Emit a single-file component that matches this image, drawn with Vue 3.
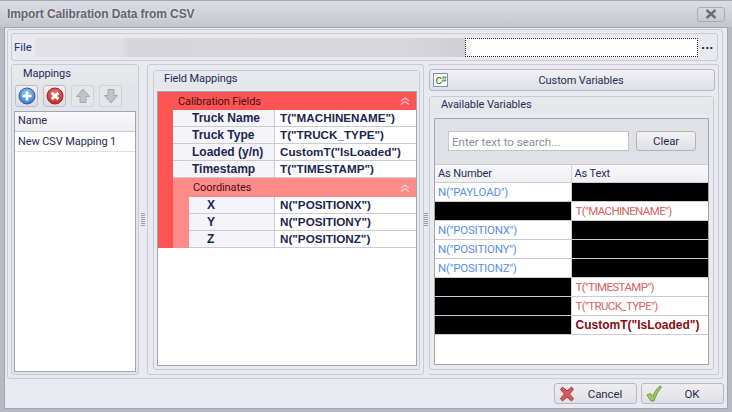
<script setup>
const calibration = [
  ['Truck Name', 'T("MACHINENAME")'],
  ['Truck Type', 'T("TRUCK_TYPE")'],
  ['Loaded (y/n)', 'CustomT("IsLoaded")'],
  ['Timestamp', 'T("TIMESTAMP")'],
]
const coords = [
  ['X', 'N("POSITIONX")'],
  ['Y', 'N("POSITIONY")'],
  ['Z', 'N("POSITIONZ")'],
]
const variables = [
  ['N("PAYLOAD")', null],
  [null, 'T("MACHINENAME")'],
  ['N("POSITIONX")', null],
  ['N("POSITIONY")', null],
  ['N("POSITIONZ")', null],
  [null, 'T("TIMESTAMP")'],
  [null, 'T("TRUCK_TYPE")'],
  [null, 'CustomT("IsLoaded")'],
]
</script>

<template>
  <div class="window">
    <header class="titlebar">
      <span class="title">Import Calibration Data from CSV</span>
      <button class="close">
        <svg width="12" height="10" viewBox="0 0 12 10"><path d="M1.5 1 L10.5 9 M10.5 1 L1.5 9" stroke="#6d6f78" stroke-width="2.4" fill="none"/></svg>
      </button>
    </header>

    <div class="client">
      <div class="root group">
        <div class="file group">
          <span class="file-label">File</span>
          <div class="file-input">
            <div class="blurred"></div>
            <div class="focus"></div>
          </div>
          <span class="dots">...</span>
        </div>

        <div class="lower">
          <section class="mappings group">
            <div class="group-title map-title">Mappings</div>
            <div class="toolbar">
              <button class="tool">
                <svg width="18" height="18" viewBox="0 0 18 18">
                  <defs><radialGradient id="blue" cx="50%" cy="35%" r="65%"><stop offset="0" stop-color="#a6d0f5"/><stop offset="1" stop-color="#2f78c4"/></radialGradient></defs>
                  <circle cx="9" cy="9" r="8" fill="url(#blue)" stroke="#2a64a8"/>
                  <path d="M9 4.5 V13.5 M4.5 9 H13.5" stroke="#fff" stroke-width="2.6"/>
                </svg>
              </button>
              <button class="tool">
                <svg width="18" height="18" viewBox="0 0 18 18">
                  <defs><radialGradient id="red" cx="50%" cy="35%" r="65%"><stop offset="0" stop-color="#ee7d7d"/><stop offset="1" stop-color="#bf2525"/></radialGradient></defs>
                  <circle cx="9" cy="9" r="8" fill="url(#red)" stroke="#a32626"/>
                  <path d="M5.7 5.7 L12.3 12.3 M12.3 5.7 L5.7 12.3" stroke="#fff" stroke-width="2.8"/>
                </svg>
              </button>
              <button class="tool dim">
                <svg width="16" height="18" viewBox="0 0 16 18"><path d="M8 2 L14.5 9.5 H11 V15.5 H5 V9.5 H1.5 Z" fill="#c2c3c6" stroke="#a5a6aa"/></svg>
              </button>
              <button class="tool dim">
                <svg width="16" height="18" viewBox="0 0 16 18"><path d="M8 16 L14.5 8.5 H11 V2.5 H5 V8.5 H1.5 Z" fill="#c2c3c6" stroke="#a5a6aa"/></svg>
              </button>
            </div>
            <div class="list">
              <div class="list-head">Name</div>
              <div class="list-row">New CSV Mapping 1</div>
            </div>
          </section>

          <div class="splitter"><i class="grip"></i></div>

          <section class="middle group">
            <div class="field group">
              <div class="group-title field-title">Field Mappings</div>
              <div class="tree">
                <div class="lvl1">
                  <div class="band band1">
                    <span>Calibration Fields</span>
                    <svg class="chev" width="10" height="8" viewBox="0 0 10 8"><path d="M1 4 L5 1 L9 4 M1 7.5 L5 4.5 L9 7.5" stroke="#e6c3c3" stroke-width="1.4" fill="none"/></svg>
                  </div>
                  <div v-for="r in calibration" :key="r[0]" class="trow">
                    <div class="tkey">{{ r[0] }}</div>
                    <div class="tval">{{ r[1] }}</div>
                  </div>
                  <div class="lvl2">
                    <div class="band band2">
                      <span>Coordinates</span>
                      <svg class="chev" width="10" height="8" viewBox="0 0 10 8"><path d="M1 4 L5 1 L9 4 M1 7.5 L5 4.5 L9 7.5" stroke="#eccfcf" stroke-width="1.4" fill="none"/></svg>
                    </div>
                    <div v-for="r in coords" :key="r[0]" class="trow nested">
                      <div class="tkey">{{ r[0] }}</div>
                      <div class="tval">{{ r[1] }}</div>
                    </div>
                  </div>
                </div>
              </div>
            </div>
          </section>

          <div class="splitter narrow"><i class="grip"></i></div>

          <section class="right group">
            <button class="custom">
              <span class="csharp">c<b>#</b></span>
              <span class="custom-label">Custom Variables</span>
            </button>
            <div class="avail group">
              <div class="group-title avail-title">Available Variables</div>
              <div class="vars">
                <div class="search">
                  <div class="search-input">Enter text to search...</div>
                  <button class="clear">Clear</button>
                </div>
                <div class="vhead">
                  <div>As Number</div>
                  <div>As Text</div>
                </div>
                <div v-for="(v, i) in variables" :key="i" class="vrow">
                  <div :class="['vcell', 'num', { black: !v[0] }]">{{ v[0] }}</div>
                  <div :class="['vcell', 'txt', { black: !v[1], strong: i === 7 }]">{{ v[1] }}</div>
                </div>
              </div>
            </div>
          </section>
        </div>
      </div>

      <footer class="footer">
        <button class="action">
          <svg class="act-icon" width="16" height="16" viewBox="0 0 16 16">
            <path d="M1.5 3.5 L3.5 1 L8 5 L12.5 1 L14.5 3.5 L10.5 8 L14.5 12.5 L12.5 15 L8 11 L3.5 15 L1.5 12.5 L5.5 8 Z" fill="#d55a5e" stroke="#a83a3e" stroke-linejoin="round"/>
          </svg>
          <span class="act-label">Cancel</span>
        </button>
        <button class="action">
          <svg class="act-icon" width="16" height="17" viewBox="0 0 16 17">
            <path d="M1 10 L4.5 8.5 L6.8 11.5 C8.5 7 11 3.5 14 .8 L15.5 2 C12 6 9.5 11 8 16 L5 16 Z" fill="#9ccb62" stroke="#6e9a3c" stroke-linejoin="round"/>
          </svg>
          <span class="act-label">OK</span>
        </button>
      </footer>
    </div>
  </div>
</template>

<style scoped>
* { box-sizing: border-box; }
button { font: inherit; letter-spacing: inherit; color: inherit; margin: 0; padding: 0; }

.window {
  width: 732px;
  height: 412px;
  display: flex;
  flex-direction: column;
  padding: 0 4px 3px;
  background: #b7b9c3;
  border-top: 1px solid #a4a6b2;
  font-family: Roboto, "Liberation Sans", Arial, sans-serif;
  font-size: 11px;
  letter-spacing: -0.1px;
  color: #1f2b57;
  overflow: hidden;
}
.titlebar {
  height: 26px;
  margin: 0 -4px;
  padding: 0 7px;
  flex: none;
  display: flex;
  align-items: center;
  justify-content: space-between;
  background: linear-gradient(#dcdde2, #c5c6cd);
}
.title {
  font-family: "Liberation Sans", Arial, sans-serif;
  font-size: 12px;
  letter-spacing: -0.1px;
  font-weight: bold;
  color: #62646f;
  text-shadow: 0 0 3px #f2f2f5;
}
.close {
  width: 28px;
  height: 15px;
  display: flex;
  align-items: center;
  justify-content: center;
  border: 1px solid #a9abb4;
  border-radius: 3px;
  background: linear-gradient(#d9dade, #c9cad0);
}

.client {
  flex: 1;
  background: #e9eaef;
  border: 1px solid #a3a4ae;
  padding: 1px 3px 0 1px;
  display: flex;
  flex-direction: column;
}
.group {
  border: 1px solid #c9cad2;
  border-radius: 3px;
}
.root {
  width: 716px;
  height: 350px;
  padding: 3px;
  display: flex;
  flex-direction: column;
  gap: 3px;
  flex: none;
  margin-left: 1px;
}
.file {
  height: 28px;
  margin-right: 1px;
  flex: none;
  display: flex;
  align-items: center;
  padding: 0 0 0 2px;
}
.file-label { width: 21px; color: #23307a; font-size: 11.5px; }
.file-input {
  width: 663px;
  height: 19px;
  display: flex;
  flex: none;
}
.blurred {
  width: 430px;
  background: linear-gradient(90deg, #e2e2e4 0, #e0e0e3 20%, #d6d6d9 22%, #d8d8db 85%, #cfcfd2 100%);
}
.focus {
  flex: 1;
  background: #fff;
  border: 1px dotted #222;
}
.dots {
  flex: 1;
  text-align: center;
  font-family: "Liberation Sans", Arial, sans-serif;
  font-size: 13px;
  font-weight: bold;
  line-height: 13px;
  letter-spacing: 0.6px;
  padding-bottom: 5px;
  color: #222;
}

.lower { flex: 1; display: flex; min-height: 0; }
.group-title { flex: none; background: linear-gradient(#e8e9ed, #e5e6ea); }

.mappings {
  width: 128px;
  flex: none;
  display: flex;
  flex-direction: column;
  padding: 0 2px 2px;
  background: #e3e4e9;
}
.map-title { height: 19px; margin: 0 -2px; padding: 2px 0 0 11px; }
.toolbar { height: 22px; margin: 1px 0 4px 1px; display: flex; gap: 5px; flex: none; }
.tool {
  width: 23px;
  height: 22px;
  border: 1px solid #bdbec6;
  border-radius: 3px;
  background: linear-gradient(#eeeef2, #dcdde2);
  display: flex;
  align-items: center;
  justify-content: center;
}
.tool.dim { border-color: #d2d3d9; background: #e5e6ea; }
.list { flex: 1; border: 1px solid #a3a4ae; background: #fff; }
.list-head {
  height: 20px;
  padding: 2px 0 0 3px;
  background: linear-gradient(#f8f8fa, #eeeff2);
  border-bottom: 1px solid #c9cad2;
}
.list-row {
  height: 20px;
  padding: 3px 0 0 3px;
  border-bottom: 1px solid #e0e1e6;
}

.splitter {
  width: 8px;
  flex: none;
  display: flex;
  align-items: center;
  justify-content: center;
}
.splitter.narrow { width: 4px; }
.grip {
  display: block;
  width: 4px;
  height: 14px;
  background: repeating-linear-gradient(#9a9ca6 0 1px, transparent 1px 2px);
}

.middle { width: 277px; flex: none; padding: 5px 3px 4px 5px; display: flex; }
.field { flex: 1; display: flex; flex-direction: column; padding: 0 2px 3px 3px; }
.field-title { height: 18px; margin: 0 -2px 2px -3px; padding: 1px 0 0 10px; }
.tree { flex: 1; border: 1px solid #a3a4ae; background: #fff; color: #1b2650; }
.lvl1 { background: #ff5454; padding-left: 15px; }
.lvl2 { background: #ff8a8a; }
.band {
  display: flex;
  align-items: center;
  justify-content: space-between;
  padding-right: 6px;
  color: #3f1012;
}
.band1 { height: 18px; padding-left: 5px; }
.band2 { height: 19px; padding-left: 20px; }
.chev { flex: none; }
.trow {
  height: 17px;
  display: flex;
  border-bottom: 1px solid #c9cad2;
  font-family: "Liberation Sans", Arial, sans-serif;
  font-weight: bold;
  letter-spacing: 0;
  line-height: 16px;
}
.tkey {
  width: 102px;
  flex: none;
  padding-left: 19px;
  background: #f5f5f9;
  border-right: 1px solid #c9cad2;
  font-size: 12px;
  white-space: nowrap;
}
.tval { flex: 1; padding-left: 5px; background: #fff; font-size: 11.7px; white-space: nowrap; }
.nested { margin-left: 16px; }
.nested .tkey { width: 86px; padding-left: 18px; }

.right {
  width: 291px;
  flex: none;
  border-left: 0;
  padding: 4px 3px 4px 1px;
  display: flex;
  flex-direction: column;
  gap: 5px;
}
.custom {
  height: 22px;
  flex: none;
  position: relative;
  display: flex;
  align-items: center;
  justify-content: center;
  border: 1px solid #b7b8c1;
  border-radius: 3px;
  background: linear-gradient(#f1f1f4, #dfe0e5);
}
.custom-label { margin-left: 18px; }
.csharp {
  position: absolute;
  left: 3px;
  top: 3px;
  width: 15px;
  height: 14px;
  border: 1px solid #7d8fc4;
  background: #fff;
  color: #3d7a10;
  font: 12px/12px "Liberation Mono", monospace;
  letter-spacing: -1px;
  text-align: center;
}
.csharp b { font-size: 9px; vertical-align: 2px; }
.avail { flex: 1; display: flex; flex-direction: column; padding: 0 4px 4px; margin-right: 1px; }
.avail-title { height: 17px; margin: 0 -4px 4px; padding: 1px 0 0 11px; }
.vars {
  flex: 1;
  border: 1px solid #a3a4ae;
  background: #fff;
  display: flex;
  flex-direction: column;
}
.search {
  height: 45px;
  flex: none;
  padding: 12px 12px 0 13px;
  display: flex;
  gap: 7px;
  background: #dfe1e6;
}
.search-input {
  width: 182px;
  height: 20px;
  border: 1px solid #c3c4cc;
  background: #fff;
  padding: 3px 0 0 3px;
  color: #8d8d9b;
  font-size: 11.5px;
  letter-spacing: 0;
}
.clear {
  width: 60px;
  height: 20px;
  border: 1px solid #b0b1ba;
  border-radius: 3px;
  background: linear-gradient(#f3f3f5, #e0e1e5);
  font-size: 11.5px;
}
.vhead {
  height: 19px;
  flex: none;
  display: flex;
  border-top: 1px solid #c9cad2;
  border-bottom: 1px solid #c9cad2;
  background: linear-gradient(#f8f8fa, #eeeff2);
  line-height: 17px;
}
.vhead div { width: 137px; padding-left: 3px; }
.vhead div:first-child { border-right: 1px solid #d4d5db; }
.vrow { height: 19px; flex: none; display: flex; border-bottom: 1px solid #c9cad2; }
.vcell { width: 137px; padding-left: 3px; font-size: 11.5px; line-height: 19px; letter-spacing: -0.2px; white-space: nowrap; }
.vcell:first-child { border-right: 1px solid #d4d5db; }
.vcell:last-child { padding-left: 4px; }
.num { color: #5a8fe8; }
.txt { color: #d9605e; letter-spacing: -0.6px; }
.strong { color: #8a0a12; font-family: "Liberation Sans", Arial, sans-serif; font-weight: bold; font-size: 12px; letter-spacing: 0; }
.black { background: #000; }

.footer {
  margin: 4px 0 0 548px;
  display: flex;
  gap: 4px;
  flex: none;
}
.action {
  width: 83px;
  height: 21px;
  display: flex;
  align-items: center;
  border: 1px solid #b7b8c1;
  border-radius: 3px;
  background: linear-gradient(#eeeef2, #dfe0e5);
  padding-left: 4px;
  font-size: 11.5px;
}
.act-icon { flex: none; }
.act-label { flex: 1; text-align: center; padding-right: 1px; }
</style>
